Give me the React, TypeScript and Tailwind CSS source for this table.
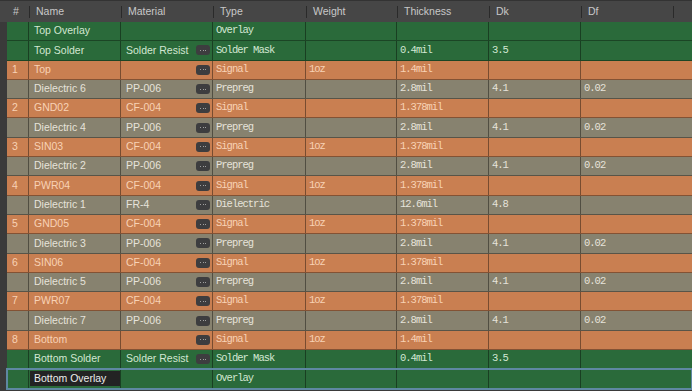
import React from 'react';

type Kind = 'green' | 'orange' | 'gray';

interface Layer {
    num: string;
    name: string;
    material: string;
    button: boolean;
    type: string;
    weight: string;
    thickness: string;
    dk: string;
    df: string;
    kind: Kind;
}

const layers: Layer[] = [
    { num: '', name: 'Top Overlay', material: '', button: false, type: 'Overlay', weight: '', thickness: '', dk: '', df: '', kind: 'green' },
    { num: '', name: 'Top Solder', material: 'Solder Resist', button: true, type: 'Solder Mask', weight: '', thickness: '0.4mil', dk: '3.5', df: '', kind: 'green' },
    { num: '1', name: 'Top', material: '', button: true, type: 'Signal', weight: '1oz', thickness: '1.4mil', dk: '', df: '', kind: 'orange' },
    { num: '', name: 'Dielectric 6', material: 'PP-006', button: true, type: 'Prepreg', weight: '', thickness: '2.8mil', dk: '4.1', df: '0.02', kind: 'gray' },
    { num: '2', name: 'GND02', material: 'CF-004', button: true, type: 'Signal', weight: '', thickness: '1.378mil', dk: '', df: '', kind: 'orange' },
    { num: '', name: 'Dielectric 4', material: 'PP-006', button: true, type: 'Prepreg', weight: '', thickness: '2.8mil', dk: '4.1', df: '0.02', kind: 'gray' },
    { num: '3', name: 'SIN03', material: 'CF-004', button: true, type: 'Signal', weight: '1oz', thickness: '1.378mil', dk: '', df: '', kind: 'orange' },
    { num: '', name: 'Dielectric 2', material: 'PP-006', button: true, type: 'Prepreg', weight: '', thickness: '2.8mil', dk: '4.1', df: '0.02', kind: 'gray' },
    { num: '4', name: 'PWR04', material: 'CF-004', button: true, type: 'Signal', weight: '1oz', thickness: '1.378mil', dk: '', df: '', kind: 'orange' },
    { num: '', name: 'Dielectric 1', material: 'FR-4', button: true, type: 'Dielectric', weight: '', thickness: '12.6mil', dk: '4.8', df: '', kind: 'gray' },
    { num: '5', name: 'GND05', material: 'CF-004', button: true, type: 'Signal', weight: '1oz', thickness: '1.378mil', dk: '', df: '', kind: 'orange' },
    { num: '', name: 'Dielectric 3', material: 'PP-006', button: true, type: 'Prepreg', weight: '', thickness: '2.8mil', dk: '4.1', df: '0.02', kind: 'gray' },
    { num: '6', name: 'SIN06', material: 'CF-004', button: true, type: 'Signal', weight: '1oz', thickness: '1.378mil', dk: '', df: '', kind: 'orange' },
    { num: '', name: 'Dielectric 5', material: 'PP-006', button: true, type: 'Prepreg', weight: '', thickness: '2.8mil', dk: '4.1', df: '0.02', kind: 'gray' },
    { num: '7', name: 'PWR07', material: 'CF-004', button: true, type: 'Signal', weight: '1oz', thickness: '1.378mil', dk: '', df: '', kind: 'orange' },
    { num: '', name: 'Dielectric 7', material: 'PP-006', button: true, type: 'Prepreg', weight: '', thickness: '2.8mil', dk: '4.1', df: '0.02', kind: 'gray' },
    { num: '8', name: 'Bottom', material: '', button: true, type: 'Signal', weight: '1oz', thickness: '1.4mil', dk: '', df: '', kind: 'orange' },
    { num: '', name: 'Bottom Solder', material: 'Solder Resist', button: true, type: 'Solder Mask', weight: '', thickness: '0.4mil', dk: '3.5', df: '', kind: 'green' },
    { num: '', name: 'Bottom Overlay', material: '', button: false, type: 'Overlay', weight: '', thickness: '', dk: '', df: '', kind: 'green' },
];

// Row colours by layer kind (copper / dielectric / mask+overlay)
const kindStyles: Record<Kind, string> = {
    green: 'bg-[#2a6a3a] text-[#d2e7d2]',
    orange: 'bg-[#c97f51] text-[#f8d2b5]',
    gray: 'bg-[#87826f] text-[#e6e3da]',
};

const sans = { fontFamily: '"Liberation Sans", Arial, sans-serif' };
const mono = { fontFamily: '"Liberation Mono", "DejaVu Sans Mono", monospace' };

const headers = ['Name', 'Material', 'Type', 'Weight', 'Thickness', 'Dk', 'Df'];
const widths = ['w-[92px]', 'w-[92px]', 'w-[93px]', 'w-[91px]', 'w-[92px]', 'w-[92px]', 'w-[92px]'];

function DotsButton() {
    return (
        <span className="ml-auto mr-[2px] flex h-[10px] w-[14px] items-center justify-center gap-[1.5px] rounded-[3px] bg-[#3d3d3f]">
            <span className="h-[1px] w-[1px] bg-[#a0a0a0]" />
            <span className="h-[1px] w-[1px] bg-[#a0a0a0]" />
            <span className="h-[1px] w-[1px] bg-[#a0a0a0]" />
        </span>
    );
}

function MonoCell({ value, width }: { value: string; width: string }) {
    return (
        <div
            className={`${width} flex h-full shrink-0 items-center border-r border-black/40 pl-[3px] text-[10.5px] tracking-[-1px]`}
            style={mono}
        >
            {value}
        </div>
    );
}

function LayerRow({ layer, editing }: { layer: Layer; editing: boolean }) {
    return (
        <div
            className={`flex h-[19.3px] shrink-0 border-b border-black/35 ${kindStyles[layer.kind]} ${
                editing ? 'outline-2 -outline-offset-1 outline-[#5e88a2]' : ''
            }`}
        >
            <div className="flex h-full w-[22px] shrink-0 items-center border-r border-black/40 pl-[5px] text-[10.5px]" style={sans}>
                {layer.num}
            </div>
            <div className="flex h-full w-[92px] shrink-0 items-center border-r border-black/40 py-[2px] pl-[1px]">
                <div
                    className={`flex h-full w-full items-center pl-[4px] text-[10.5px] ${
                        editing ? 'bg-[#232323] text-[#ececec]' : ''
                    }`}
                    style={sans}
                >
                    {layer.name}
                </div>
            </div>
            <div className="flex h-full w-[92px] shrink-0 items-center border-r border-black/40 pl-[5px] text-[10.5px]" style={sans}>
                <span>{layer.material}</span>
                {layer.button && <DotsButton />}
            </div>
            <MonoCell value={layer.type} width="w-[93px]" />
            <MonoCell value={layer.weight} width="w-[91px]" />
            <MonoCell value={layer.thickness} width="w-[92px]" />
            <MonoCell value={layer.dk} width="w-[92px]" />
            <div className="flex h-full flex-1 items-center pl-[3px] text-[10.5px] tracking-[-1px]" style={mono}>
                {layer.df}
            </div>
        </div>
    );
}

export default function App() {
    return (
        <div className="flex h-[391px] w-[692px] flex-col overflow-hidden bg-[#3a3a3a]">
            {/* Header */}
            <div className="flex h-[22px] shrink-0 border-t border-[#333] bg-[#464646] pl-[7px] text-[10.5px] text-[#c8c8c8]" style={sans}>
                <div className="flex w-[22px] shrink-0 items-center pl-[6px]">#</div>
                {headers.map((h, i) => (
                    <div key={h} className={`${widths[i]} flex shrink-0 items-center`}>
                        <span className="h-[12px] w-[1px] bg-[#2a2a2a]" />
                        <span className="pl-[6px]">{h}</span>
                    </div>
                ))}
                <div className="flex flex-1 items-center">
                    <span className="h-[12px] w-[1px] bg-[#2a2a2a]" />
                </div>
            </div>

            {/* Layer stack */}
            <div className="flex flex-col pl-[7px]">
                {layers.map((layer, i) => (
                    <LayerRow key={layer.name} layer={layer} editing={i === layers.length - 1} />
                ))}
            </div>
        </div>
    );
}
